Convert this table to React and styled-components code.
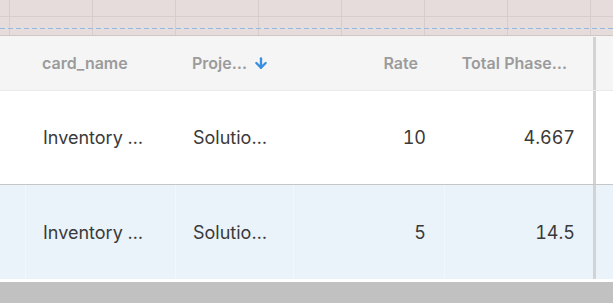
import React from 'react';
import styled, { createGlobalStyle } from 'styled-components';
import { ArrowDown } from 'lucide-react';

const GlobalStyle = createGlobalStyle`
  body {
    margin: 0;
    background: #ffffff;
    font-family: Inter, "Noto Sans", sans-serif;
  }
`;

const Page = styled.div`
  width: 613px;
  height: 305px;
  overflow: hidden;
  display: flex;
  flex-direction: column;
`;

/* pink design canvas strip above the table */
const Canvas = styled.div`
  height: 36px;
  flex: none;
  display: flex;
  flex-direction: column;
  padding-top: 28px;
  box-sizing: border-box;
  border-bottom: 1px solid #cfc6c6;
  background-color: #e6dcdc;
  background-image:
    linear-gradient(to right, #d8cdcd 1px, transparent 1px),
    linear-gradient(to bottom, #d8cdcd 1px, transparent 1px);
  background-size: 83px 100%, 100% 60px;
  background-position: 9px 0, 0 16px;
  background-repeat: repeat-x, no-repeat;
`;

const Guide = styled.div`
  height: 1px;
  background-image: repeating-linear-gradient(to right, #95b9e2 0 5px, transparent 5px 8px);
`;

const Row = styled.div`
  flex: none;
  display: grid;
  grid-template-columns: 25px 150px 118px 151px 149px 3px 1fr;
  height: ${p => p.$height}px;
  background: ${p => p.$bg};
  border-bottom: ${p => (p.$border ? `1px solid ${p.$border}` : 'none')};
`;

const Cell = styled.div`
  display: flex;
  align-items: center;
  justify-content: ${p => (p.$right ? 'flex-end' : 'flex-start')};
  padding: ${p => (p.$right ? '0 18px 0 17px' : '0 17px')};
  border-left: 1px solid ${p => p.$line || 'transparent'};
  font-size: 18px;
  font-variant-numeric: tabular-nums;
  color: #3a3a3a;
  white-space: nowrap;
  overflow: hidden;
  &:first-child { border-left: none; }
`;

const HeadCell = styled(Cell)`
  padding: ${p => (p.$right ? '0 26px 0 17px' : '0 17px')};
  font-size: 16px;
  font-weight: 600;
  color: #9b9b9b;
  gap: 6px;
  border-left: none;
`;

const Divider = styled.div`
  background: #d3d3d3;
  margin-top: ${p => p.$offset || 0}px;
`;

const SortIcon = styled(ArrowDown)`
  color: #3a8ee0;
  flex: none;
`;

const Spacer = styled.div`
  height: 3px;
  flex: none;
`;

const Scrollbar = styled.div`
  height: 21px;
  flex: none;
  background: #c1c1c1;
`;

const rows = [
  { name: 'Inventory …', project: 'Solutio…', rate: '10', total: '4.667', bg: '#ffffff', line: 'transparent', border: '#c6c6c6', height: 93 },
  { name: 'Inventory …', project: 'Solutio…', rate: '5', total: '14.5', bg: '#eaf2fa', line: '#f2f7fc', border: null, height: 94 },
];

export default function App() {
  return (
    <Page>
      <GlobalStyle />
      <Canvas>
        <Guide />
      </Canvas>

      <Row $height={54} $bg="#f5f5f5" $border="#ebebeb">
        <HeadCell />
        <HeadCell>card_name</HeadCell>
        <HeadCell>
          Proje…
          <SortIcon size={16} strokeWidth={3.5} />
        </HeadCell>
        <HeadCell $right>Rate</HeadCell>
        <HeadCell $right>Total Phase…</HeadCell>
        <Divider $offset={1} />
        <HeadCell />
      </Row>

      {rows.map((r, i) => (
        <Row key={i} $height={r.height} $bg={r.bg} $border={r.border}>
          <Cell />
          <Cell $line={r.line}>{r.name}</Cell>
          <Cell $line={r.line}>{r.project}</Cell>
          <Cell $line={r.line} $right>{r.rate}</Cell>
          <Cell $line={r.line} $right>{r.total}</Cell>
          <Divider />
          <Cell />
        </Row>
      ))}

      <Spacer />
      <Scrollbar />
    </Page>
  );
}
